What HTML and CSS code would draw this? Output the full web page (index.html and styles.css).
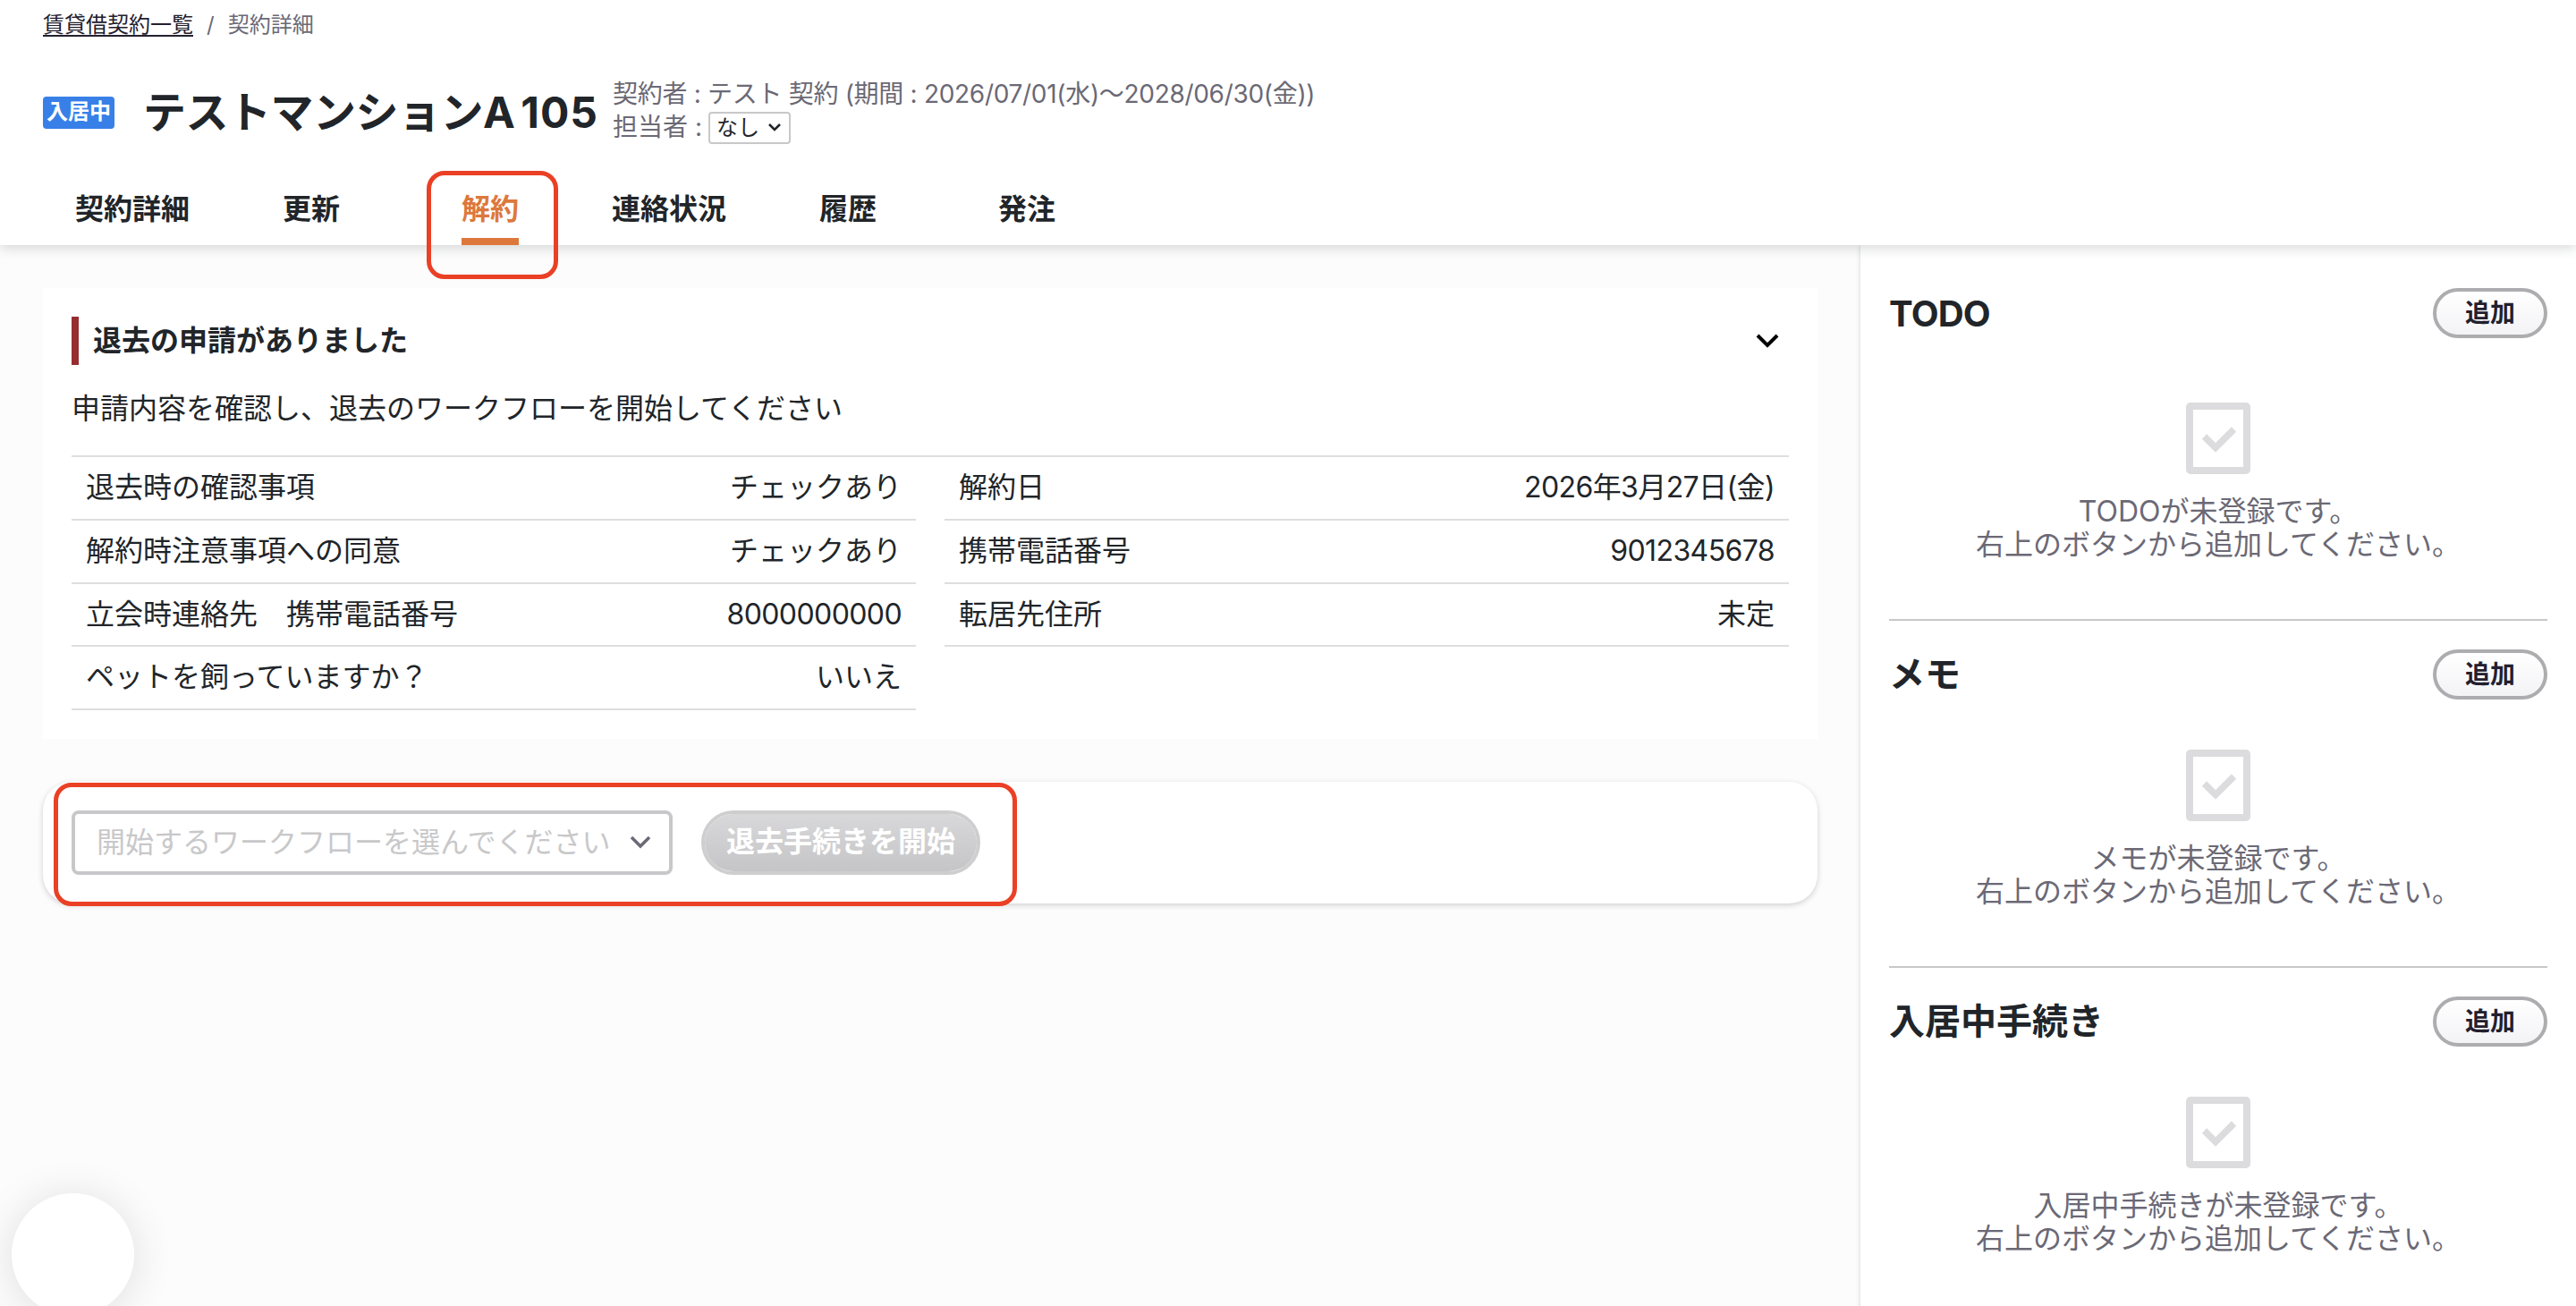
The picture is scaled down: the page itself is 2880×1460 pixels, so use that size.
FILE: index.html
```html
<!DOCTYPE html>
<html lang="ja">
<head>
    <meta charset="UTF-8">
    <meta name="viewport" content="width=device-width, initial-scale=1.0">
    <title>契約詳細</title>
    <link rel="stylesheet" href="styles.css">
</head>
<body>
    <header class="header">
        <nav class="breadcrumb">
            <a href="#">賃貸借契約一覧</a>
            <span class="separator">/</span>
            <span>契約詳細</span>
        </nav>
        <div class="title-row">
            <span class="status-badge">入居中</span>
            <h1>テストマンションA <span class="room">105</span></h1>
            <div class="contract-info">
                <p class="contractor">契約者 : テスト 契約 (期間 : 2026/07/01(水)〜2028/06/30(金))</p>
                <div class="staff">
                    <span>担当者 :</span>
                    <button class="staff-select">
                        なし
                        <svg width="16" height="12" viewBox="0 0 16 12"><path d="M2 2l6 6 6-6" fill="none" stroke="#212529" stroke-width="2.600"/></svg>
                    </button>
                </div>
            </div>
        </div>
        <nav class="tabs">
            <a class="tab" href="#"><span>契約詳細</span></a>
            <a class="tab" href="#"><span>更新</span></a>
            <a class="tab active" href="#"><span>解約</span></a>
            <a class="tab" href="#"><span>連絡状況</span></a>
            <a class="tab" href="#"><span>履歴</span></a>
            <a class="tab" href="#"><span>発注</span></a>
        </nav>
        <div class="highlight highlight-tab"></div>
    </header>

    <div class="layout">
        <main class="main">
            <section class="card">
                <div class="card-head">
                    <h2>退去の申請がありました</h2>
                    <svg width="28" height="18" viewBox="0 0 28 18"><path d="M3 3l11 11L25 3" fill="none" stroke="#000" stroke-width="4"/></svg>
                </div>
                <p class="card-text">申請内容を確認し、退去のワークフローを開始してください</p>
                <div class="details">
                    <dl class="detail-list">
                        <div class="detail-row"><dt>退去時の確認事項</dt><dd>チェックあり</dd></div>
                        <div class="detail-row"><dt>解約時注意事項への同意</dt><dd>チェックあり</dd></div>
                        <div class="detail-row"><dt>立会時連絡先　携帯電話番号</dt><dd class="num">8000000000</dd></div>
                        <div class="detail-row"><dt>ペットを飼っていますか？</dt><dd>いいえ</dd></div>
                    </dl>
                    <dl class="detail-list">
                        <div class="detail-row"><dt>解約日</dt><dd class="num">2026年3月27日(金)</dd></div>
                        <div class="detail-row"><dt>携帯電話番号</dt><dd class="num">9012345678</dd></div>
                        <div class="detail-row"><dt>転居先住所</dt><dd>未定</dd></div>
                    </dl>
                </div>
            </section>

            <section class="workflow">
                <button class="workflow-select">
                    開始するワークフローを選んでください
                    <svg width="24" height="16" viewBox="0 0 24 16"><path d="M2 2l10 10L22 2" fill="none" stroke="#6b6975" stroke-width="3.5"/></svg>
                </button>
                <button class="start-btn" disabled>退去手続きを開始</button>
                <div class="highlight highlight-workflow"></div>
            </section>
        </main>

        <aside class="sidebar">
            <section class="side-section">
                <div class="side-head">
                    <h3>TODO</h3>
                    <button class="add-btn">追加</button>
                </div>
                <div class="empty">
                    <svg width="72" height="80" viewBox="0 0 72 80"><rect x="4" y="4" width="64" height="72" rx="1" fill="none" stroke="#dcdcde" stroke-width="8" stroke-linejoin="round"/><path d="M20.5 38l12.500 12.500L53.500 30" fill="none" stroke="#dcdcde" stroke-width="7.500"/></svg>
                    <p>TODOが未登録です。<br>右上のボタンから追加してください。</p>
                </div>
            </section>
            <section class="side-section">
                <div class="side-head">
                    <h3>メモ</h3>
                    <button class="add-btn">追加</button>
                </div>
                <div class="empty">
                    <svg width="72" height="80" viewBox="0 0 72 80"><rect x="4" y="4" width="64" height="72" rx="1" fill="none" stroke="#dcdcde" stroke-width="8" stroke-linejoin="round"/><path d="M20.5 38l12.500 12.500L53.500 30" fill="none" stroke="#dcdcde" stroke-width="7.500"/></svg>
                    <p>メモが未登録です。<br>右上のボタンから追加してください。</p>
                </div>
            </section>
            <section class="side-section">
                <div class="side-head">
                    <h3>入居中手続き</h3>
                    <button class="add-btn">追加</button>
                </div>
                <div class="empty">
                    <svg width="72" height="80" viewBox="0 0 72 80"><rect x="4" y="4" width="64" height="72" rx="1" fill="none" stroke="#dcdcde" stroke-width="8" stroke-linejoin="round"/><path d="M20.5 38l12.500 12.500L53.500 30" fill="none" stroke="#dcdcde" stroke-width="7.500"/></svg>
                    <p>入居中手続きが未登録です。<br>右上のボタンから追加してください。</p>
                </div>
            </section>
        </aside>
    </div>

    <div class="floating-circle"></div>
</body>
</html>
```

FILE: styles.css
```css
* {
    box-sizing: border-box;
}
body {
    margin: 0;
    height: 1460px;
    overflow: hidden;
    display: flex;
    flex-direction: column;
    font-family: Inter, "Noto Sans CJK JP", sans-serif;
    font-size: 32px;
    color: #212529;
    background-color: #fcfcfc;
}
h1, h2, h3, p, dl, dd {
    margin: 0;
}
button {
    font-family: inherit;
    color: inherit;
    padding: 0;
}
svg {
    display: block;
    flex-shrink: 0;
}
.header {
    position: relative;
    z-index: 2;
    height: 274px;
    flex-shrink: 0;
    padding: 10px 48px 0;
    display: flex;
    flex-direction: column;
    background: white;
    box-shadow: 0 4px 12px rgba(33, 37, 41, 0.16);
}
.breadcrumb {
    display: flex;
    gap: 15px;
    height: 36px;
    line-height: 36px;
    font-size: 24px;
    color: #6b6975;
}
.breadcrumb a {
    color: #23202e;
    text-decoration: underline;
    text-underline-offset: 3px;
    text-decoration-thickness: 2px;
}
.title-row {
    display: flex;
    align-items: center;
    height: 72px;
    margin-top: 44px;
    margin-bottom: 30px;
    padding-bottom: 4px;
}
.status-badge {
    width: 80px;
    height: 36px;
    margin-top: 4px;
    line-height: 34px;
    font-size: 24px;
    font-weight: bold;
    text-align: center;
    color: white;
    background-color: #3880e8;
    border-radius: 4px;
}
h1 {
    width: 526px;
    padding-left: 32px;
    margin-top: 4px;
    font-size: 48px;
    line-height: 60px;
    letter-spacing: -0.5px;
    word-spacing: -4px;
    white-space: nowrap;
}
.room {
    letter-spacing: 1px;
}
.contract-info {
    margin-left: 31px;
    font-size: 28px;
    line-height: 36px;
    color: #6b6975;
}
.contractor {
    letter-spacing: -0.3px;
}
.staff {
    display: flex;
    align-items: center;
    gap: 7px;
    height: 38px;
}
.staff-select {
    display: flex;
    align-items: center;
    justify-content: space-between;
    width: 92px;
    height: 36px;
    margin-top: 2px;
    padding: 0 8px 0 7px;
    font-size: 24px;
    line-height: 30px;
    color: #212529;
    background: white;
    border: 2px solid #c8c8ca;
    border-radius: 4px;
}
.tabs {
    display: flex;
    flex: 1;
}
.tab {
    display: flex;
    justify-content: center;
    width: 200px;
    font-weight: bold;
    color: #212529;
    text-decoration: none;
}
.tab span {
    padding-top: 18px;
    line-height: 48px;
    border-bottom: 8px solid transparent;
}
.tab.active span {
    color: #dd783c;
    border-bottom-color: #dd783c;
}
/* red frames around the parts to point out */
.highlight {
    position: absolute;
    border: 5px solid #ea4025;
    border-radius: 20px;
    pointer-events: none;
}
.highlight-tab {
    left: 477px;
    top: 191px;
    width: 147px;
    height: 121px;
}
.highlight-workflow {
    left: 12px;
    top: 1px;
    width: 1077px;
    height: 138px;
}
.layout {
    display: flex;
    flex: 1;
}
.main {
    flex: 1;
    padding: 48px;
}
.card {
    height: 504px;
    padding: 32px;
    background: white;
}
.card-head {
    display: flex;
    align-items: center;
    justify-content: space-between;
    height: 54px;
    padding-right: 10px;
}
.card-head h2 {
    padding-left: 16px;
    border-left: 8px solid #962e31;
    font-size: 32px;
    line-height: 54px;
}
.card-text {
    margin-top: 25px;
    line-height: 48px;
}
.details {
    display: grid;
    grid-template-columns: 1fr 1fr;
    gap: 32px;
    margin-top: 28px;
    border-top: 2px solid #dedede;
}
.detail-row {
    display: flex;
    justify-content: space-between;
    height: 70.8px;
    padding: 0 16px;
    line-height: 68px;
    border-bottom: 2px solid #dedede;
}
.num {
    letter-spacing: -0.6px;
}
.workflow {
    position: relative;
    display: flex;
    gap: 32px;
    height: 136px;
    margin-top: 48px;
    padding: 32px;
    background: white;
    border-radius: 32px;
    box-shadow: 0 2px 6px rgba(33, 37, 41, 0.2);
}
.workflow-select {
    display: flex;
    align-items: center;
    justify-content: space-between;
    width: 672px;
    height: 72px;
    padding: 0 20px 0 24px;
    font-size: 32px;
    line-height: 60px;
    color: #c8c8ca;
    background: white;
    border: 4px solid #c8c8ca;
    border-radius: 8px;
}
.start-btn {
    width: 312px;
    height: 72px;
    padding-bottom: 2px;
    font-size: 32px;
    line-height: 60px;
    font-weight: bold;
    color: white;
    background: linear-gradient(#d8d8da, #c5c5c7) padding-box;
    border: 4px solid #cececf;
    border-radius: 36px;
}
.sidebar {
    width: 800px;
    padding: 48px 32px 0;
    background: white;
    box-shadow: 0 0 5px rgba(33, 37, 41, 0.2);
}
.side-section {
    height: 388px;
    padding-top: 32px;
    border-bottom: 2px solid #c8c8ca;
}
.side-section:first-child {
    height: 372px;
    padding-top: 0;
}
.side-section:last-child {
    border-bottom: none;
}
.side-head {
    display: flex;
    align-items: center;
    justify-content: space-between;
    height: 56px;
}
.side-head h3 {
    font-size: 40px;
    line-height: 56px;
}
.side-section:first-child h3 {
    padding-top: 2px;
    letter-spacing: -0.8px;
}
.add-btn {
    width: 128px;
    height: 56px;
    font-size: 28px;
    line-height: 44px;
    font-weight: bold;
    color: #23202e;
    background: linear-gradient(#fff, #f3f3f6) padding-box;
    border: 4px solid #adadb0;
    border-radius: 28px;
}
.empty {
    display: flex;
    flex-direction: column;
    align-items: center;
    gap: 24px;
    padding-top: 56px;
    line-height: 36.8px;
    text-align: center;
    color: #6b6975;
}
.side-section:first-child .empty {
    padding-top: 72px;
}
.floating-circle {
    position: fixed;
    z-index: 3;
    left: 13px;
    top: 1334px;
    width: 137px;
    height: 137px;
    background: white;
    border-radius: 50%;
    box-shadow: 0 4px 48px rgba(0, 0, 0, 0.12);
}
```
